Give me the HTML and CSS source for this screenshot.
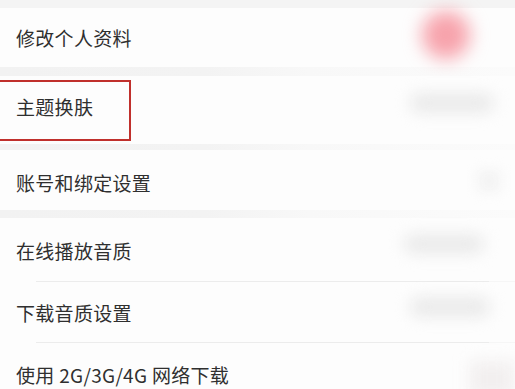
FILE: index.html
```html
<!DOCTYPE html>
<html lang="zh-CN">
<head>
<meta charset="utf-8">
<link rel="stylesheet" href="styles.css">
</head>
<body>
<div class="list">
  <div class="band band-top"></div>
  <div class="row row-1">
    <span class="label">修改个人资料</span>
    <span class="avatar"></span>
  </div>
  <div class="band band-a"></div>
  <div class="row row-2">
    <span class="label">主题换肤</span>
    <span class="pill pill-2"></span>
    <span class="highlight"></span>
  </div>
  <div class="band band-b"></div>
  <div class="row row-3">
    <span class="label">账号和绑定设置</span>
    <span class="arrow"></span>
  </div>
  <div class="band band-c"></div>
  <div class="row row-4">
    <span class="label">在线播放音质</span>
    <span class="pill pill-4"></span>
  </div>
  <div class="line"></div>
  <div class="row row-5">
    <span class="label">下载音质设置</span>
    <span class="pill pill-5"></span>
  </div>
  <div class="line"></div>
  <div class="row row-6">
    <span class="label">使用 2G/3G/4G 网络下载</span>
    <span class="toggle"></span>
  </div>
</div>
</body>
</html>
```

FILE: styles.css
```css
html, body {
  margin: 0;
  padding: 0;
  background: #fdfdfd;
  overflow: hidden;
}
body {
  width: 515px;
  height: 389px;
  font-family: "Noto Sans CJK SC", "Noto Sans", sans-serif;
  color: #2f2f2f;
}
.list {
  display: flex;
  flex-direction: column;
  height: 389px;
  overflow: hidden;
}
.band {
  background: linear-gradient(to right, #f2f2f2 0%, #f3f3f3 40%, #f8f8f8 60%, #fbfbfb 100%);
}
.band-top { height: 8px; background: #f4f4f4; }
.band-a { height: 9px; }
.band-b { height: 6px; }
.band-c { height: 8px; }
.line {
  height: 1px;
  background: linear-gradient(to right, #fdfdfd 0 7%, #ececec 7% 95%, #f6f6f6 95%);
}
.row {
  position: relative;
  display: flex;
  align-items: center;
  padding-left: 16px;
  padding-right: 20px;
  background: #fdfdfd;
}
.row-1 { height: 59px; }
.row-2 { height: 68px; }
.row-3 { height: 60px; }
.row-4 { height: 63px; }
.row-5 { height: 60px; }
.row-6 {
  height: 46px;
  align-items: flex-start;
  padding-top: 22px;
  box-sizing: border-box;
}
.label {
  font-size: 19px;
  letter-spacing: 0.3px;
  line-height: 1;
}
.row-1 .label { margin-top: -1px; }
.row-2 .label { margin-top: -8px; }
.row-3 .label { margin-top: 4px; }
.row-4 .label { margin-top: 2px; }
.avatar {
  position: absolute;
  left: 422px;
  top: 3px;
  width: 48px;
  height: 48px;
  border-radius: 50%;
  background: #f7a3ac;
  filter: blur(9px);
}
.pill {
  position: absolute;
  height: 18px;
  border-radius: 9px;
  background: #e8e8e8;
  filter: blur(8px);
}
.pill-2 { left: 410px; top: 18px; width: 84px; }
.pill-4 { left: 404px; top: 17px; width: 80px; }
.pill-5 { left: 410px; top: 16px; width: 80px; }
.arrow {
  position: absolute;
  left: 478px;
  top: 20px;
  width: 22px;
  height: 22px;
  background: #f3f3f3;
  filter: blur(6px);
}
.toggle {
  position: absolute;
  left: 470px;
  top: 18px;
  width: 44px;
  height: 36px;
  background: #f2efef;
  filter: blur(8px);
}
.highlight {
  position: absolute;
  left: -4px;
  top: 4px;
  width: 131px;
  height: 57px;
  border: 2px solid #c0302c;
}
```
